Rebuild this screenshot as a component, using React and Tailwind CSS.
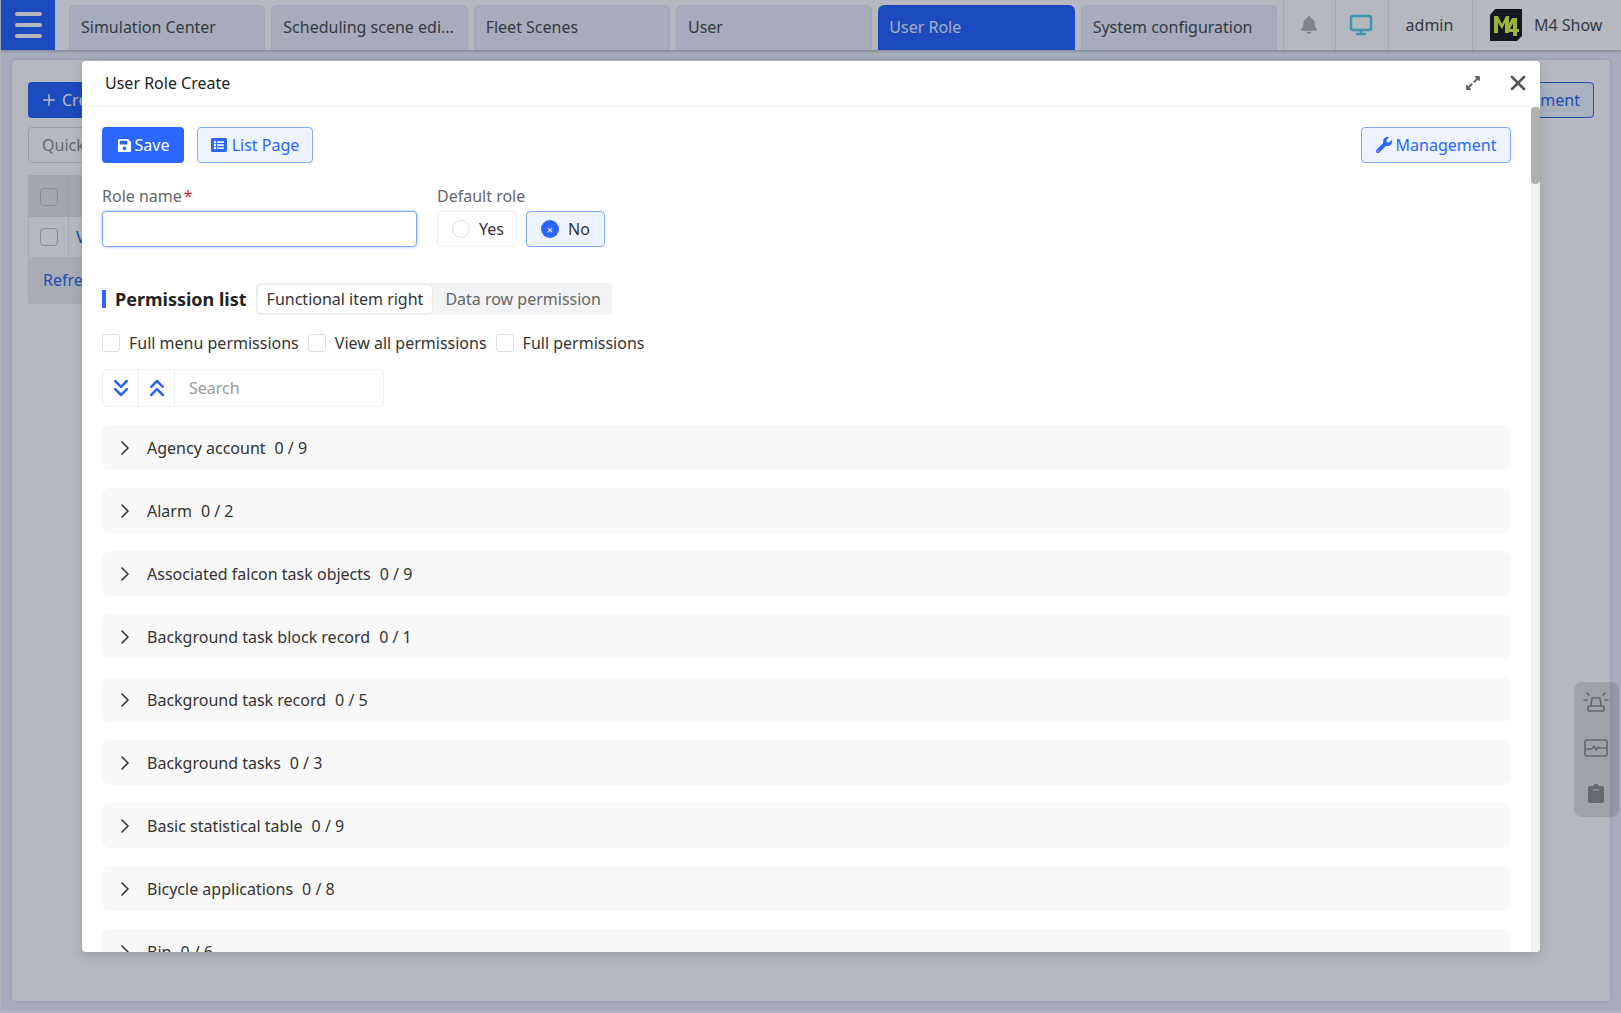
import React from "react";
import { ChevronRight, X, Monitor, ChevronsDown, ChevronsUp, Plus } from "lucide-react";
import { FaBell, FaSave, FaListAlt, FaWrench, FaExpandAlt } from "react-icons/fa";

const tabs = ["Simulation Center", "Scheduling scene edi...", "Fleet Scenes", "User", "User Role", "System configuration"];

const groups = [
  ["Agency account", "0 / 9"],
  ["Alarm", "0 / 2"],
  ["Associated falcon task objects", "0 / 9"],
  ["Background task block record", "0 / 1"],
  ["Background task record", "0 / 5"],
  ["Background tasks", "0 / 3"],
  ["Basic statistical table", "0 / 9"],
  ["Bicycle applications", "0 / 8"],
  ["Bin", "0 / 6"],
];

function Logo() {
  return (
    <svg width="32" height="32" viewBox="0 0 32 32">
      <path d="M5 0H32V27L27 32H0V6Z" fill="#111" />
      <path d="M4 24V7H8L12 15L16 7H19V24H15V14L12 20L8 14V24Z" fill="#d8f63c" />
      <path d="M22 9L16 20V23H23V27H27V23H29V20H27V9ZM23 14V20H20Z" fill="#d8f63c" />
    </svg>
  );
}

function AlarmIcon() {
  return (
    <svg width="26" height="22" viewBox="0 0 26 22" fill="none" stroke="currentColor" strokeWidth="1.6" strokeLinecap="round">
      <path d="M8 14L9 7H17L18 14" />
      <rect x="5" y="15" width="16" height="5" rx="1" />
      <path d="M1 9H4M22 9H25M4 2L6 4M22 2L20 4" />
    </svg>
  );
}

function PulseIcon() {
  return (
    <svg width="24" height="18" viewBox="0 0 24 18" fill="none" stroke="currentColor" strokeWidth="1.6" strokeLinejoin="round">
      <rect x="1" y="1" width="22" height="16" rx="1.5" />
      <path d="M1 10H8L10 7L12 11L14 8L15 9H23" />
    </svg>
  );
}

function ClipIcon() {
  return (
    <svg width="16" height="20" viewBox="0 0 16 20">
      <path d="M2 3H5.5C5.5 0 10.5 0 10.5 3H14C15 3 16 4 16 5V18C16 19 15 20 14 20H2C1 20 0 19 0 18V5C0 4 1 3 2 3Z" fill="currentColor" />
      <path d="M5 7H11" stroke="#d6d6d6" strokeWidth="1.2" />
    </svg>
  );
}

function Page() {
  return (
    <div className="h-[1013px] bg-[#fbfbfd] pl-px pb-[2px]">
      <div className="h-full flex flex-col bg-[#e9eef9]">
        <header className="h-[50px] shrink-0 flex bg-white shadow-[0_1px_3px_rgba(0,0,0,0.3)]">
          <button className="w-[54px] bg-[#1b5cff] flex flex-col items-center justify-center gap-[7px]">
            <span className="w-[27px] h-[4px] rounded bg-white"></span>
            <span className="w-[27px] h-[4px] rounded bg-white"></span>
            <span className="w-[27px] h-[4px] rounded bg-white"></span>
          </button>
          <div className="flex gap-[6px] pl-[14px] pt-[5px]">
            {tabs.map((t) =>
              t === "User Role" ? (
                <div key={t} className="w-[196.33px] h-[45px] rounded-t-md bg-[#1b5cff] text-[#e5edff] px-[11px] pb-[2px] flex items-center">{t}</div>
              ) : (
                <div key={t} className="w-[196.33px] h-[45px] rounded-t-md border border-[#dde3f2] border-b-0 bg-[#e9edf9] text-[#444] px-[11px] pb-[2px] flex items-center">{t}</div>
              )
            )}
          </div>
          <div className="ml-[6px] flex flex-1">
            <div className="w-[52px] border-l border-[#e4e7ee] flex items-center justify-center">
              <FaBell size={18} className="text-[#b0b2b6]" />
            </div>
            <div className="w-[53px] border-l border-[#e4e7ee] flex items-center justify-center pr-[2px]">
              <Monitor size={24} strokeWidth={2.5} className="text-[#48cee6]" />
            </div>
            <div className="w-[84px] border-l border-[#e4e7ee] flex items-center justify-center text-[#444] pr-[2px]">admin</div>
            <div className="flex-1 border-l border-[#e4e7ee] flex items-center pl-[17px] gap-[12px] text-[#444]">
              <Logo />
              <span>M4 Show</span>
            </div>
          </div>
        </header>
        <div className="relative flex-1 mx-[11px] mt-[10px] mb-[10px] bg-white rounded shadow-[0_0_4px_rgba(0,0,0,0.15)] px-[16px] pt-[22px]">
          <div className="flex justify-between">
            <button className="h-[36px] w-[120px] bg-[#1b5cff] rounded text-white flex items-center pl-3 gap-1">
              <Plus size={18} /> Create
            </button>
            <button className="h-[36px] w-[120px] border border-[#2563eb] bg-[#eef4ff] rounded text-[#2563eb] flex items-center justify-end pr-[13px]">Management</button>
          </div>
          <div className="mt-[9px] h-[36px] w-[200px] border border-[#d4d7dd] rounded text-[#888] flex items-center px-[13px]">Quick</div>
          <div className="mt-[12px] w-[400px] border border-[#e4e7ee]">
            <div className="h-[41px] bg-[#e3e5e8] flex items-center">
              <span className="w-[40px] h-full flex items-center justify-center border-r border-[#d8dade]">
                <span className="w-[18px] h-[18px] border border-[#bbb] rounded-sm"></span>
              </span>
            </div>
            <div className="h-[40px] flex items-center text-[#2563eb]">
              <span className="w-[40px] h-full flex items-center justify-center border-r border-[#e4e7ee]">
                <span className="w-[18px] h-[18px] border border-[#bbb] rounded-sm"></span>
              </span>
              <span className="ml-[7px]">View</span>
            </div>
            <div className="h-[46px] bg-[#eceef1] flex items-center px-[14px] text-[#2563eb]">Refresh</div>
          </div>
          <div className="absolute right-[-9px] top-[622px] w-[45px] h-[135px] rounded-lg bg-black/[0.13] flex flex-col items-center justify-between pt-[9px] pb-[14px] pr-[1px] text-[#888]">
            <AlarmIcon />
            <PulseIcon />
            <ClipIcon />
          </div>
        </div>
      </div>
    </div>
  );
}

function Field({ label, required, children }) {
  return (
    <div>
      <div className="h-[26px] leading-[26px] text-[#666]">
        {label}
        {required && <span className="text-[#e11d48] ml-[2px]">*</span>}
      </div>
      {children}
    </div>
  );
}

function Check({ label }) {
  return (
    <label className="flex items-center gap-[9px] text-[#333]">
      <span className="w-[18px] h-[18px] rounded-[3px] border border-[#dcdfe6] bg-white"></span>
      {label}
    </label>
  );
}

function Modal() {
  return (
    <div className="absolute left-[82px] top-[61px] w-[1458px] h-[891px] bg-white rounded overflow-hidden flex flex-col shadow-[0_4px_12px_rgba(0,0,0,0.15)]">
      <div className="h-[46px] shrink-0 border-b border-[#f2f2f2] flex items-center pl-[23px] pb-[2px] text-[#222]">
        <span>User Role Create</span>
        <FaExpandAlt size={16} className="ml-auto text-[#666]" />
        <X size={24} strokeWidth={2.6} className="ml-[25px] mr-[10px] text-[#555]" />
      </div>
      <div className="flex flex-1 min-h-0">
        <div className="flex-1 min-w-0 overflow-hidden pl-[20px] pr-[20px] pt-[20px]">
          <div className="flex gap-[13px]">
            <button className="h-[36px] w-[82px] rounded bg-[#2b66ff] text-white flex items-center justify-center gap-[3px]">
              <FaSave size={15} /> Save
            </button>
            <button className="h-[36px] w-[116px] rounded border border-[#85a9ff] bg-[#edf3ff] text-[#2b66ff] flex items-center justify-center gap-[5px]">
              <FaListAlt size={16} /> List Page
            </button>
            <button className="ml-auto h-[36px] w-[150px] rounded border border-[#85a9ff] bg-[#edf3ff] text-[#2b66ff] flex items-center justify-center gap-[4px]">
              <FaWrench size={16} /> Management
            </button>
          </div>
          <div className="flex gap-[20px] mt-[20px]">
            <Field label="Role name" required>
              <input className="block mt-[2px] w-[315px] h-[36px] rounded border border-[#85a9ff] shadow-[0_0_3px_rgba(43,102,255,0.5)] outline-none" />
            </Field>
            <Field label="Default role">
              <div className="flex gap-[9px] mt-[2px] text-[#333]">
                <div className="w-[80px] h-[36px] rounded border border-[#eee] flex items-center pl-[14px] gap-[9px]">
                  <span className="w-[18px] h-[18px] rounded-full border border-[#dcdfe6]"></span>Yes
                </div>
                <div className="w-[79px] h-[36px] rounded border border-[#85a9ff] bg-[#edf3ff] flex items-center pl-[14px] gap-[9px]">
                  <span className="w-[18px] h-[18px] rounded-full bg-[#2b66ff] flex items-center justify-center text-white text-[11px] leading-none">×</span>No
                </div>
              </div>
            </Field>
          </div>
          <div className="flex items-center mt-[36px] h-[32px]">
            <span className="w-[4px] h-[18px] bg-[#2b66ff]"></span>
            <span className="ml-[9px] text-[18px] font-bold text-[#222]">Permission list</span>
            <div className="ml-[9px] h-[32px] flex items-center bg-[#f2f3f5] rounded p-[2px] pr-[11px]">
              <span className="h-[28px] px-[9px] flex items-center bg-white rounded shadow-[0_0_2px_rgba(0,0,0,0.15)] text-[#333]">Functional item right</span>
              <span className="ml-[13px] text-[#666]">Data row permission</span>
            </div>
          </div>
          <div className="flex gap-[9px] mt-[16px] h-[24px] items-center">
            <Check label="Full menu permissions" />
            <Check label="View all permissions" />
            <Check label="Full permissions" />
          </div>
          <div className="mt-[14px] w-[282px] h-[38px] flex border border-[#eceef2] rounded-md">
            <div className="w-[36px] flex items-center justify-center border-r border-[#eceef2] text-[#2b66ff]">
              <ChevronsDown size={28} strokeWidth={2.2} />
            </div>
            <div className="w-[36px] flex items-center justify-center border-r border-[#eceef2] text-[#2b66ff]">
              <ChevronsUp size={28} strokeWidth={2.2} />
            </div>
            <div className="flex-1 flex items-center pl-[14px] text-[#999]">Search</div>
          </div>
          <div className="mt-[18px] flex flex-col gap-[18px]">
            {groups.map(([name, count]) => (
              <div key={name} className="h-[45px] shrink-0 rounded-lg bg-[#f8f8f8] flex items-center pl-[11px] text-[#333]">
                <ChevronRight size={24} strokeWidth={1.6} className="text-[#333]" />
                <span className="ml-[10px]">{name}</span>
                <span className="ml-[9px]">{count}</span>
              </div>
            ))}
          </div>
        </div>
        <div className="w-[9px] bg-[#f1f1f1]">
          <div className="h-[77px] rounded-[4px] bg-[#b0b0b0]"></div>
        </div>
      </div>
    </div>
  );
}

export default function App() {
  return (
    <div className="relative h-[1013px] overflow-hidden text-[16px] font-['Noto_Sans','Liberation_Sans',sans-serif]">
      <Page />
      <div className="absolute inset-0 bg-[rgba(30,40,60,0.33)]"></div>
      <Modal />
    </div>
  );
}
